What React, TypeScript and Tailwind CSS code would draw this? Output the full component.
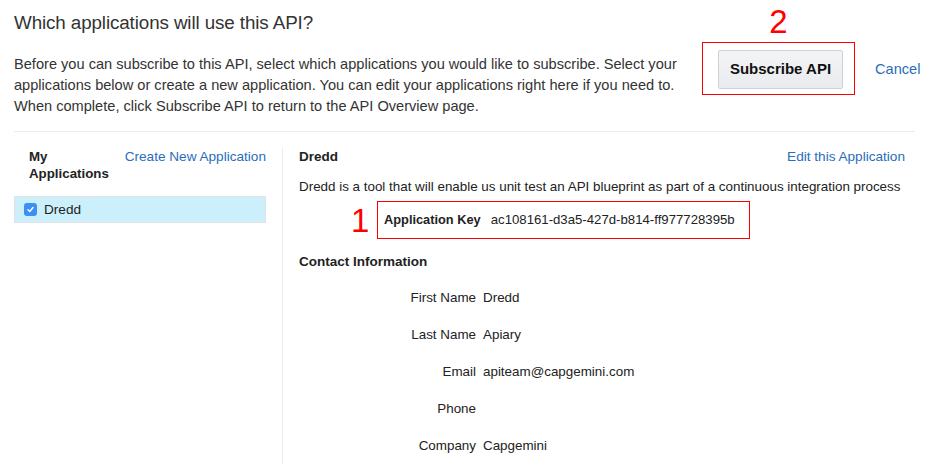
import React from "react";

const rows: [string, string][] = [
  ["First Name", "Dredd"],
  ["Last Name", "Apiary"],
  ["Email", "apiteam@capgemini.com"],
  ["Phone", ""],
  ["Company", "Capgemini"],
];

export default function App() {
  return (
    <div
      className="w-[929px] h-[464px] overflow-hidden bg-white text-[#333]"
      style={{ fontFamily: '"Liberation Sans", Arial, sans-serif' }}
    >
      <div className="px-[14px] pt-[11px]">
        <div className="flex">
          <div className="w-[675px] shrink-0">
            <h1 className="text-[18.8px] leading-[24px] tracking-[-0.1px] text-[#333]">Which applications will use this API?</h1>
            <p className="mt-[19px] text-[14.6px] leading-[21px] text-[#333]">
              Before you can subscribe to this API, select which applications you would like to subscribe. Select your
              applications below or create a new application. You can edit your applications right here if you need to.
              When complete, click Subscribe API to return to the API Overview page.
            </p>
          </div>
          <div className="ml-[13px] shrink-0 flex flex-col items-center w-[153px]">
            <div className="text-[#f00] text-[33px] leading-[33px] mt-[-6px] h-[37px]">2</div>
            <div className="w-[153px] h-[53px] border border-[#f00] flex items-start pl-[15px] pt-[7px]">
              <button className="w-[125px] h-[39px] rounded-[2px] border border-[#cdd2d8] bg-gradient-to-b from-[#f3f4f6] to-[#e9ebee] text-[15px] font-bold text-[#111]">
                Subscribe API
              </button>
            </div>
          </div>
          <div className="ml-[20px] shrink-0 mt-[46px] text-[14.6px] leading-[24px] text-[#2a6ebb]">Cancel</div>
        </div>
        <div className="mt-[14px] border-t border-[#ececec]" />
      </div>

      <div className="flex px-[14px]">
        <div className="w-[252px] shrink-0 pt-[16px]">
          <div className="flex justify-between">
            <div className="pl-[15px] text-[13.3px] leading-[17px] font-bold text-[#222]">
              My
              <br />
              Applications
            </div>
            <div className="text-[13.6px] leading-[17px] text-[#2a6ebb]">Create New Application</div>
          </div>
          <div className="mt-[14px] h-[27px] border border-[#e2e2e2] bg-[#ccf0fb] flex items-center pl-[9px]">
            <span className="w-[13px] h-[13px] rounded-[3px] bg-[#3d8ff2] flex items-center justify-center">
              <svg width="9" height="9" viewBox="0 0 10 10">
                <path d="M2.2 5.3 L4.2 7.2 L7.8 2.8" stroke="white" strokeWidth="1.6" fill="none" strokeLinecap="round" strokeLinejoin="round" />
              </svg>
            </span>
            <span className="ml-[7px] text-[13.6px] leading-[17px] text-[#222]">Dredd</span>
          </div>
        </div>

        <div className="ml-[16px] shrink-0 border-l border-[#ececec] h-[333px] mt-[16px]" />

        <div className="flex-1 pl-[16px] pr-[10px] pt-[16px]">
          <div className="flex justify-between">
            <div className="text-[13.5px] leading-[17px] font-bold text-[#222]">Dredd</div>
            <div className="text-[13.6px] leading-[17px] text-[#2a6ebb]">Edit this Application</div>
          </div>
          <div className="mt-[13px] text-[13.4px] leading-[17px] text-[#222] whitespace-nowrap">
            Dredd is a tool that will enable us unit test an API blueprint as part of a continuous integration process
          </div>
          <div className="flex items-center mt-[6px] ml-[52px]">
            <div className="text-[#f00] text-[33px] leading-[33px] w-[26px]">1</div>
            <div className="w-[373px] h-[38px] border border-[#f00] flex items-center pl-[6px]">
              <span className="text-[12.8px] font-bold text-[#222]">Application Key</span>
              <span className="ml-[10px] text-[13.2px] text-[#222]">ac108161-d3a5-427d-b814-ff977728395b</span>
            </div>
          </div>
          <div className="mt-[14px] text-[13.5px] leading-[17px] font-bold text-[#222]">Contact Information</div>
          <div className="mt-[19px] flex flex-col gap-[20px]">
            {rows.map(([k, v]) => (
              <div key={k} className="flex text-[13.4px] leading-[17px] text-[#222]">
                <div className="w-[177px] text-right">{k}</div>
                <div className="ml-[7px]">{v}</div>
              </div>
            ))}
          </div>
        </div>
      </div>
    </div>
  );
}
